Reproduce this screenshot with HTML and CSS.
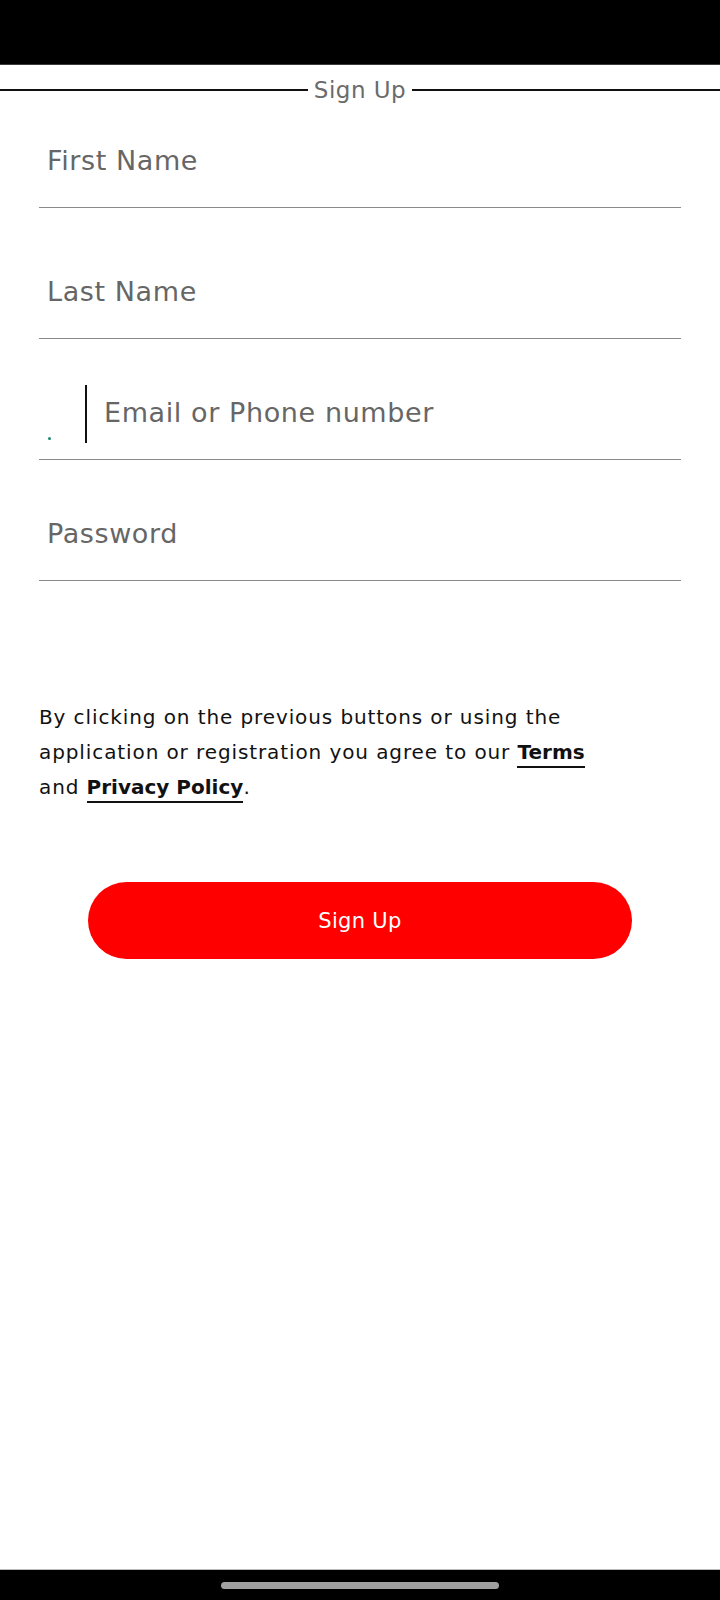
FILE: index.html
```html
<!DOCTYPE html>
<html lang="en">
<head>
    <meta charset="UTF-8">
    <meta name="viewport" content="width=device-width, initial-scale=1.0">
    <title>Sign Up</title>
    <link rel="stylesheet" href="styles.css">
</head>
<body>
    <div class="status-bar"></div>

    <div class="page">
        <div class="title-row">
            <span class="title-line"></span>
            <span class="title">Sign Up</span>
            <span class="title-line"></span>
        </div>

        <div class="form">
            <div class="field first">
                <span class="label">First Name</span>
            </div>
            <div class="field second">
                <span class="label">Last Name</span>
            </div>
            <div class="field email">
                <span class="code"><span class="dot"></span></span>
                <span class="caret"></span>
                <span class="label">Email or Phone number</span>
            </div>
            <div class="field">
                <span class="label">Password</span>
            </div>

            <p class="terms">
                By clicking on the previous buttons or using the<br>
                application or registration you agree to our <a href="#">Terms</a><br>
                and <a href="#">Privacy Policy</a>.
            </p>

            <button id="signup-button">Sign Up</button>
        </div>
    </div>

    <div class="nav-bar">
        <span class="home-indicator"></span>
    </div>
</body>
</html>
```

FILE: styles.css
```css
body {
  font-family: "DejaVu Sans", sans-serif;
  margin: 0;
  padding: 0;
  background-color: #fff;
  display: flex;
  flex-direction: column;
  height: 1600px;
  overflow: hidden;
}

.status-bar {
  height: 64px;
  background-color: #000;
  border-bottom: 1px solid #3a3a3a;
  flex-shrink: 0;
}

.page {
  flex: 1;
}

.title-row {
  display: flex;
  align-items: center;
  gap: 6px;
  height: 50px;
}

.title-line {
  flex: 1;
  height: 2px;
  background-color: #111;
}

.title {
  font-size: 23px;
  letter-spacing: 0.5px;
  color: #6b6b6b;
  line-height: 30px;
}

.form {
  padding: 0 39px;
}

.field {
  display: flex;
  align-items: center;
  padding: 54px 0 26px 8px;
  border-bottom: 1px solid #8a8a8a;
}

.field.first {
  padding-top: 26px;
}

.field.second {
  padding-top: 64px;
}

.label {
  font-size: 27px;
  line-height: 40px;
  letter-spacing: 0.6px;
  color: #666;
}

.field.email {
  padding-left: 0;
}

.code {
  width: 46px;
  height: 40px;
  display: flex;
  align-items: flex-end;
  padding-left: 9px;
  box-sizing: border-box;
}

.dot {
  width: 3px;
  height: 3px;
  border-radius: 50%;
  background-color: #1a8a70;
  margin-bottom: -7px;
}

.caret {
  width: 2px;
  height: 58px;
  background-color: #111;
  margin: -8px 17px -10px 0;
}

.terms {
  margin: 119px 0 0 0;
  font-size: 20px;
  line-height: 35px;
  letter-spacing: 0.9px;
  color: #111;
}

.terms a {
  color: #111;
  font-weight: bold;
  letter-spacing: 0;
  text-decoration: none;
  border-bottom: 2px solid #111;
  padding-bottom: 2px;
}

#signup-button {
  display: block;
  width: 544px;
  height: 77px;
  margin: 77px auto 0 auto;
  background-color: #ff0000;
  color: #fff;
  border: none;
  border-radius: 39px;
  font-family: inherit;
  font-size: 21px;
  letter-spacing: 0.3px;
  cursor: pointer;
}

.nav-bar {
  height: 30px;
  background-color: #000;
  border-top: 1px solid #bbb;
  display: flex;
  justify-content: center;
  flex-shrink: 0;
}

.home-indicator {
  width: 278px;
  height: 7px;
  margin-top: 12px;
  border-radius: 4px;
  background-color: #a0a0a0;
}
```
